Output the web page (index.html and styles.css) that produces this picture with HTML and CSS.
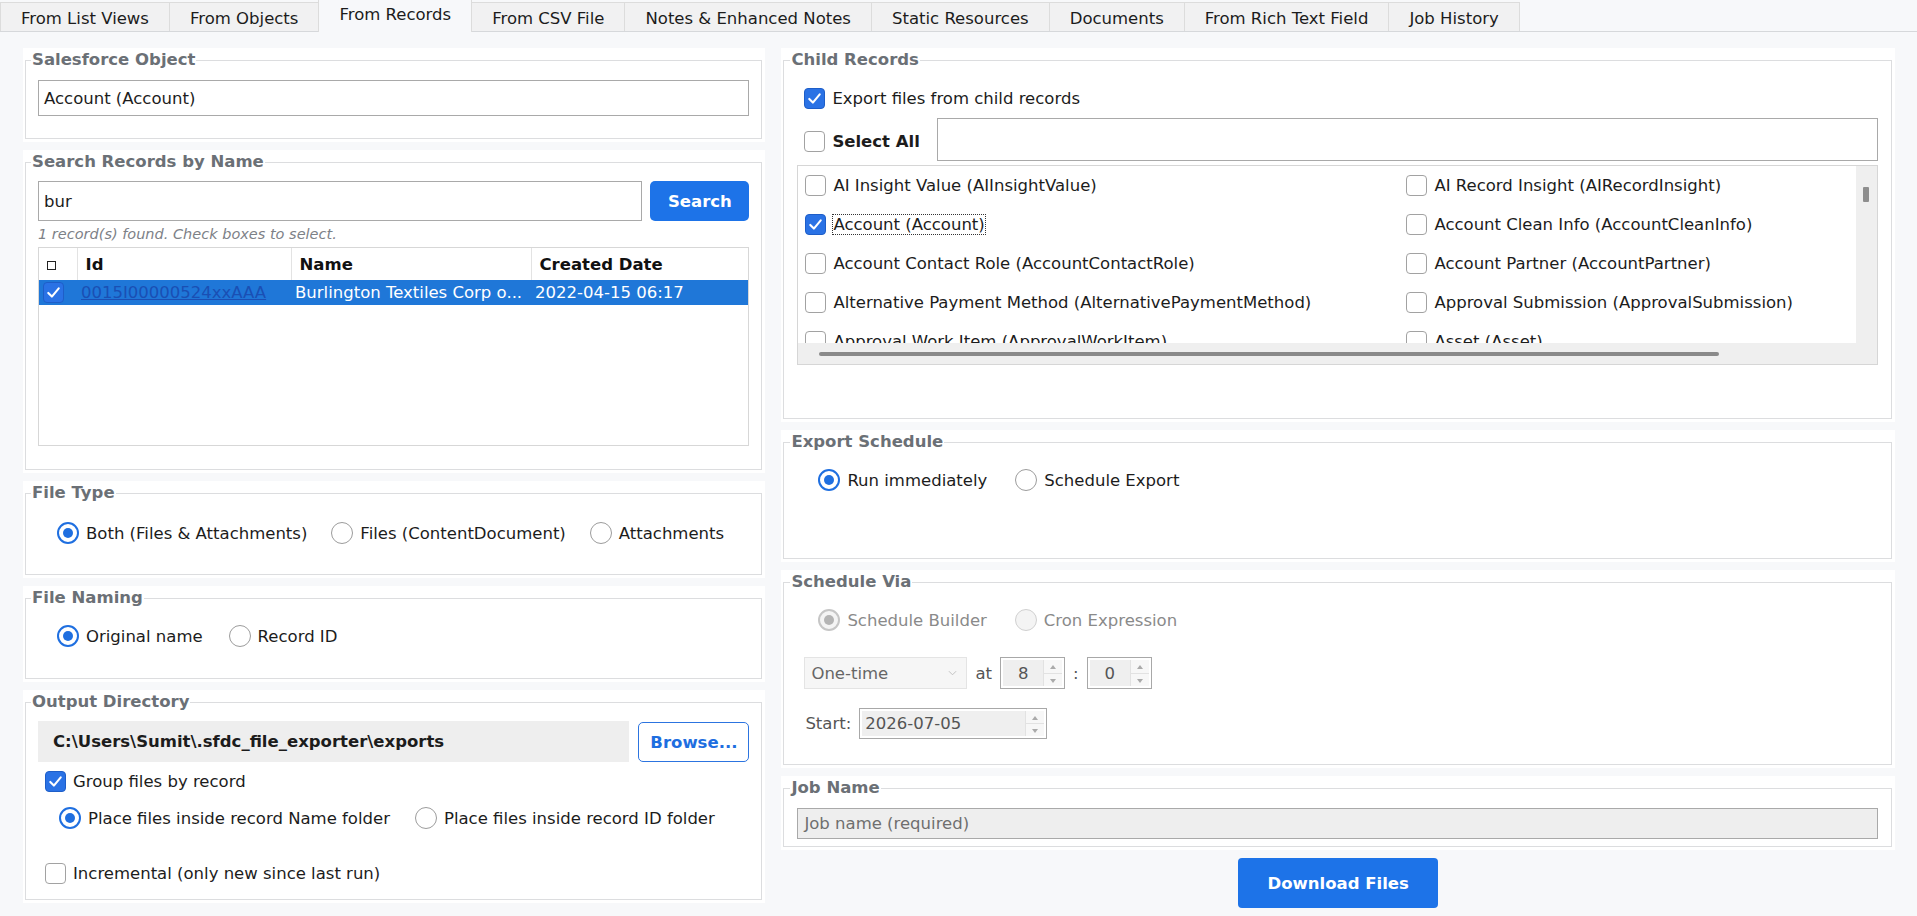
FILE: index.html
```html
<!DOCTYPE html>
<html lang="en">
<head>
  <meta charset="UTF-8" />
  <meta name="viewport" content="width=device-width, initial-scale=1.0"/>
  <title>SFDC File Exporter</title>
  <link rel="stylesheet" href="styles.css">
</head>
<body>
  <nav class="tabs">
    <div class="tab">From List Views</div>
    <div class="tab">From Objects</div>
    <div class="tab active">From Records</div>
    <div class="tab">From CSV File</div>
    <div class="tab">Notes &amp; Enhanced Notes</div>
    <div class="tab">Static Resources</div>
    <div class="tab">Documents</div>
    <div class="tab">From Rich Text Field</div>
    <div class="tab">Job History</div>
  </nav>

  <main class="content">
    <div class="col">
      <section class="panel h-object">
        <fieldset>
          <legend>Salesforce Object</legend>
          <div class="text-input object-input">Account (Account)</div>
        </fieldset>
      </section>

      <section class="panel h-search">
        <fieldset>
          <legend>Search Records by Name</legend>
          <div class="search-row">
            <div class="text-input search-input">bur</div>
            <button class="btn-primary btn-search">Search</button>
          </div>
          <div class="hint">1 record(s) found. Check boxes to select.</div>
          <div class="records">
            <table>
              <colgroup>
                <col style="width:38px">
                <col style="width:214px">
                <col style="width:240px">
                <col>
              </colgroup>
              <thead>
                <tr>
                  <th class="th-check"><span class="mini-box"></span></th>
                  <th>Id</th>
                  <th>Name</th>
                  <th>Created Date</th>
                </tr>
              </thead>
              <tbody>
                <tr class="selected">
                  <td class="td-check">
                    <span class="cb on"><svg viewBox="0 0 20 20"><path d="M4.5 10.5l3.8 3.8 7.2-8.6"/></svg></span>
                  </td>
                  <td class="td-id"><span class="id-link">0015I00000524xxAAA</span></td>
                  <td class="td-name">Burlington Textiles Corp o...</td>
                  <td class="td-date">2022-04-15 06:17</td>
                </tr>
              </tbody>
            </table>
          </div>
        </fieldset>
      </section>

      <section class="panel h-type">
        <fieldset>
          <legend>File Type</legend>
          <div class="radio-row type-row">
            <label class="opt"><span class="rb on"></span>Both (Files &amp; Attachments)</label>
            <label class="opt"><span class="rb"></span>Files (ContentDocument)</label>
            <label class="opt"><span class="rb"></span>Attachments</label>
          </div>
        </fieldset>
      </section>

      <section class="panel h-naming">
        <fieldset>
          <legend>File Naming</legend>
          <div class="radio-row naming-row">
            <label class="opt"><span class="rb on"></span>Original name</label>
            <label class="opt"><span class="rb"></span>Record ID</label>
          </div>
        </fieldset>
      </section>

      <section class="panel h-output">
        <fieldset>
          <legend>Output Directory</legend>
          <div class="path-row">
            <div class="path-field">C:\Users\Sumit\.sfdc_file_exporter\exports</div>
            <button class="btn-outline">Browse...</button>
          </div>
          <label class="opt check-row group-row">
            <span class="cb on"><svg viewBox="0 0 20 20"><path d="M4.5 10.5l3.8 3.8 7.2-8.6"/></svg></span>Group files by record
          </label>
          <div class="radio-row folder-row">
            <label class="opt"><span class="rb on"></span>Place files inside record Name folder</label>
            <label class="opt"><span class="rb"></span>Place files inside record ID folder</label>
          </div>
          <label class="opt check-row incr-row"><span class="cb"></span>Incremental (only new since last run)</label>
        </fieldset>
      </section>
    </div>

    <div class="col">
      <section class="panel h-child">
        <fieldset>
          <legend>Child Records</legend>
          <label class="opt check-row export-row">
            <span class="cb on"><svg viewBox="0 0 20 20"><path d="M4.5 10.5l3.8 3.8 7.2-8.6"/></svg></span>Export files from child records
          </label>
          <div class="select-row">
            <label class="opt select-all"><span class="cb"></span>Select All</label>
            <div class="text-input filter-input"></div>
          </div>
          <div class="child-list">
            <div class="child-view">
              <div class="child-grid">
                <label class="opt"><span class="cb"></span>AI Insight Value (AIInsightValue)</label>
                <label class="opt"><span class="cb"></span>AI Record Insight (AIRecordInsight)</label>
                <label class="opt"><span class="cb on"><svg viewBox="0 0 20 20"><path d="M4.5 10.5l3.8 3.8 7.2-8.6"/></svg></span><span class="focus">Account (Account)</span></label>
                <label class="opt"><span class="cb"></span>Account Clean Info (AccountCleanInfo)</label>
                <label class="opt"><span class="cb"></span>Account Contact Role (AccountContactRole)</label>
                <label class="opt"><span class="cb"></span>Account Partner (AccountPartner)</label>
                <label class="opt"><span class="cb"></span>Alternative Payment Method (AlternativePaymentMethod)</label>
                <label class="opt"><span class="cb"></span>Approval Submission (ApprovalSubmission)</label>
                <label class="opt"><span class="cb"></span>Approval Work Item (ApprovalWorkItem)</label>
                <label class="opt"><span class="cb"></span>Asset (Asset)</label>
              </div>
              <div class="vscroll"><span class="vthumb"></span></div>
            </div>
            <div class="hscroll"><span class="hthumb"></span></div>
          </div>
        </fieldset>
      </section>

      <section class="panel h-export">
        <fieldset>
          <legend>Export Schedule</legend>
          <div class="radio-row sched-row">
            <label class="opt"><span class="rb on"></span>Run immediately</label>
            <label class="opt"><span class="rb"></span>Schedule Export</label>
          </div>
        </fieldset>
      </section>

      <section class="panel h-via">
        <fieldset>
          <legend>Schedule Via</legend>
          <div class="radio-row sched-row disabled">
            <label class="opt"><span class="rb on dis"></span>Schedule Builder</label>
            <label class="opt"><span class="rb dis"></span>Cron Expression</label>
          </div>
          <div class="time-row">
            <div class="dropdown">
              <span>One-time</span>
              <svg class="chev" viewBox="0 0 10 6"><path d="M1 1l4 4 4-4"/></svg>
            </div>
            <span class="muted">at</span>
            <div class="spinner spin-small">
              <span class="spin-val">8</span>
              <span class="spin-btns"><i class="up"></i><i class="down"></i></span>
            </div>
            <span class="muted">:</span>
            <div class="spinner spin-small">
              <span class="spin-val">0</span>
              <span class="spin-btns"><i class="up"></i><i class="down"></i></span>
            </div>
          </div>
          <div class="start-row">
            <span class="muted">Start:</span>
            <div class="spinner spin-date">
              <span class="spin-val">2026-07-05</span>
              <span class="spin-btns"><i class="up"></i><i class="down"></i></span>
            </div>
          </div>
        </fieldset>
      </section>

      <section class="panel h-job">
        <fieldset>
          <legend>Job Name</legend>
          <div class="job-input">Job name (required)</div>
        </fieldset>
      </section>

      <div class="actions">
        <button class="btn-primary btn-download">Download Files</button>
      </div>
    </div>
  </main>
</body>
</html>
```

FILE: styles.css
```css
body {
  margin: 0;
  background-color: #f7f8fa;
  font-family: "DejaVu Sans", Verdana, sans-serif;
  font-size: 16.5px;
  color: #1c1c1c;
}

/* tab strip */
.tabs {
  display: flex;
  align-items: flex-end;
  height: 32px;
  box-sizing: border-box;
  border-bottom: 1px solid #d6d8db;
}

.tab {
  height: 28px;
  line-height: 31px;
  padding: 0 20px;
  background-color: #f1f1f2;
  border: 1px solid #dcdcdc;
  border-bottom: none;
  margin-right: -1px;
  white-space: nowrap;
}

.tab.active {
  height: 32px;
  line-height: 30px;
  background-color: #f7f8fa;
  margin-bottom: -1px;
  position: relative;
}

/* two columns */
.content {
  display: grid;
  grid-template-columns: 2fr 3fr;
  gap: 16px;
  padding: 16px 22px 0 23px;
}

.col {
  display: flex;
  flex-direction: column;
  gap: 8px;
}

.panel {
  background-color: #fff;
  padding: 2px 3px 3px 2px;
  box-sizing: border-box;
}

.panel fieldset {
  margin: 0;
  height: 100%;
  box-sizing: border-box;
  border: 1px solid #dcdddf;
  padding: 0 12px;
  min-width: 0;
}

.col + .col .panel fieldset {
  padding: 0 13px;
}

.panel legend {
  font-weight: bold;
  color: #6b7076;
  line-height: 20px;
  padding: 0 1px;
  margin-left: -7px;
}

.h-object { height: 94px; }
.h-search { height: 323px; }
.h-type { height: 97px; }
.h-naming { height: 96px; }
.h-output { height: 213px; }
.h-child { height: 374px; }
.h-export { height: 132px; }
.h-via { height: 198px; }
.h-job { height: 74px; }

/* inputs */
.text-input {
  background-color: #fff;
  border: 1px solid #a9a9a9;
  box-sizing: border-box;
  padding: 0 5px;
  display: flex;
  align-items: center;
}

.object-input {
  margin-top: 10px;
  height: 36px;
}

.search-row {
  display: flex;
  gap: 8px;
  margin-top: 9px;
  height: 40px;
}

.search-input {
  flex: 1;
}

.btn-primary {
  background-color: #1d73e8;
  color: #fff;
  border: none;
  border-radius: 5px;
  font-family: inherit;
  font-size: 16.5px;
  font-weight: bold;
}

.btn-search {
  width: 99px;
}

.hint {
  margin-top: 4px;
  font-size: 14.5px;
  line-height: 18px;
  font-style: italic;
  color: #7d8187;
}

.records {
  margin-top: 4px;
  height: 199px;
  border: 1px solid #d7d7d7;
  box-sizing: border-box;
  background-color: #fff;
}

.records table {
  width: 100%;
  border-collapse: collapse;
  table-layout: fixed;
}

.records th {
  height: 32px;
  text-align: left;
  padding: 0 0 0 8px;
  border-right: 1px solid #e3e3e3;
  font-weight: bold;
  color: #111;
}

.records th:last-child {
  border-right: none;
}

.records th.th-check {
  padding-left: 8px;
}

.mini-box {
  display: inline-block;
  width: 9px;
  height: 9px;
  border: 1px solid #222;
  box-sizing: border-box;
  vertical-align: middle;
}

.records tr.selected td {
  background-color: #1f77d8;
  color: #fff;
  height: 25px;
  padding: 0 0 0 4px;
  white-space: nowrap;
  overflow: hidden;
}

.records td.td-check {
  padding-left: 9px;
}

.td-check .cb {
  vertical-align: middle;
  border-color: #1a4fa6;
}

.td-id {
  padding-left: 3px;
}

.id-link {
  color: #1a4fb4;
  text-decoration: underline;
}

/* check boxes & radios */
.opt {
  display: flex;
  align-items: center;
  gap: 7px;
  white-space: nowrap;
}

.cb {
  flex: none;
  display: inline-block;
  width: 21px;
  height: 21px;
  box-sizing: border-box;
  border: 1px solid #a2a2a2;
  border-radius: 4px;
  background-color: #fff;
}

.cb.on {
  background-color: #2a72e5;
  border-color: #1e5ec8;
}

.cb svg {
  display: block;
  width: 100%;
  height: 100%;
}

.cb svg path {
  fill: none;
  stroke: #fff;
  stroke-width: 2.2;
  stroke-linecap: round;
  stroke-linejoin: round;
}

.rb {
  flex: none;
  position: relative;
  width: 22px;
  height: 22px;
  box-sizing: border-box;
  border: 1px solid #9c9c9c;
  border-radius: 50%;
  background-color: #fff;
}

.rb.on {
  border: 2px solid #1f6fe0;
}

.rb.on::after {
  content: "";
  position: absolute;
  left: 4px;
  top: 4px;
  width: 10px;
  height: 10px;
  border-radius: 50%;
  background-color: #1f6fe0;
}

.rb.dis {
  border-color: #d0d0d0;
  background-color: #f4f4f4;
}

.rb.dis.on {
  border: 2px solid #c6c6c6;
}

.rb.dis.on::after {
  background-color: #b4b4b4;
}

.radio-row {
  display: flex;
  align-items: center;
  height: 24px;
  gap: 26px;
}

.type-row {
  margin-top: 18px;
  padding-left: 19px;
  gap: 24px;
}

.naming-row {
  margin-top: 16px;
  padding-left: 19px;
}

.check-row {
  height: 24px;
  padding-left: 7px;
}

/* output directory */
.path-row {
  display: flex;
  gap: 9px;
  margin-top: 9px;
  height: 41px;
}

.path-field {
  flex: 1;
  background-color: #eeeeee;
  display: flex;
  align-items: center;
  padding-left: 15px;
  font-weight: bold;
}

.btn-outline {
  width: 111px;
  background-color: #fff;
  border: 1px solid #2c74e0;
  border-radius: 5px;
  color: #1e6ee0;
  font-family: inherit;
  font-size: 16.5px;
  font-weight: bold;
  margin-top: 1px;
}

.group-row {
  margin-top: 7px;
}

.folder-row {
  margin-top: 13px;
  padding-left: 21px;
  gap: 25px;
}

.incr-row {
  margin-top: 31px;
}

/* child records */
.export-row {
  margin-top: 16px;
}

.select-row {
  display: flex;
  align-items: center;
  gap: 17px;
  margin-top: 8px;
  height: 43px;
  padding-left: 7px;
}

.select-all {
  font-weight: bold;
  padding-top: 4px;
}

.filter-input {
  flex: 1;
  height: 43px;
}

.child-list {
  margin-top: 4px;
  border: 1px solid #d6d6d6;
  height: 200px;
  box-sizing: border-box;
  background-color: #efefef;
}

.child-view {
  display: flex;
  height: 177px;
}

.child-grid {
  flex: 1;
  display: grid;
  grid-template-columns: 601px 1fr;
  grid-auto-rows: 39px;
  overflow: hidden;
  background-color: #fff;
  padding-left: 7px;
}

.focus {
  outline: 1px dotted #333;
  outline-offset: 0;
}

.vscroll {
  width: 21px;
  position: relative;
}

.vthumb {
  position: absolute;
  left: 7px;
  top: 21px;
  width: 6px;
  height: 15px;
  background-color: #8e8e8e;
  border-radius: 1px;
}

.hscroll {
  height: 21px;
  position: relative;
}

.hthumb {
  position: absolute;
  left: 21px;
  top: 9px;
  width: 900px;
  height: 4px;
  border-radius: 2px;
  background-color: #8a8a8a;
}

/* schedule */
.sched-row {
  margin-top: 16px;
  padding-left: 21px;
  gap: 28px;
}

.disabled {
  color: #8a8a8a;
}

.time-row {
  display: flex;
  align-items: center;
  margin-top: 25px;
  padding-left: 7px;
  height: 32px;
  gap: 8px;
}

.muted {
  color: #555;
}

.dropdown {
  width: 163px;
  height: 32px;
  box-sizing: border-box;
  border: 1px solid #e4e4e4;
  background-color: #f6f6f6;
  color: #666;
  display: flex;
  align-items: center;
  justify-content: space-between;
  padding: 0 9px 0 6px;
}

.chev {
  width: 9px;
  height: 6px;
}

.chev path {
  fill: none;
  stroke: #bbb;
  stroke-width: 1;
}

.spinner {
  display: flex;
  border: 1px solid #a8a8a8;
  box-sizing: border-box;
  background-color: #fff;
  padding: 2px;
}

.spin-small {
  width: 65px;
  height: 32px;
}

.spin-small .spin-val {
  padding-left: 15px;
}

.spin-val {
  flex: 1;
  background-color: #efefef;
  display: flex;
  align-items: center;
  color: #555;
  padding-left: 3px;
}

.spin-btns {
  width: 18px;
  display: flex;
  flex-direction: column;
  border-left: 1px solid #e2e2e2;
  background-color: #f7f7f7;
}

.spin-btns i {
  flex: 1;
  position: relative;
}

.spin-btns i + i {
  border-top: 1px solid #e2e2e2;
}

.spin-btns i::after {
  content: "";
  position: absolute;
  left: 6px;
  top: 5px;
  border-left: 3px solid transparent;
  border-right: 3px solid transparent;
}

.spin-btns .up::after {
  border-bottom: 4px solid #aaa;
}

.spin-btns .down::after {
  border-top: 4px solid #aaa;
}

.start-row {
  display: flex;
  align-items: center;
  gap: 8px;
  margin-top: 19px;
  padding-left: 8px;
  height: 31px;
}

.spin-date {
  width: 188px;
  height: 31px;
}

/* job name */
.job-input {
  margin-top: 10px;
  height: 31px;
  box-sizing: border-box;
  border: 1px solid #a9a9a9;
  background-color: #eeeeee;
  color: #6f6f6f;
  display: flex;
  align-items: center;
  padding-left: 6px;
}

.actions {
  display: flex;
  justify-content: center;
}

.btn-download {
  width: 200px;
  height: 50px;
  border-radius: 4px;
}
```
